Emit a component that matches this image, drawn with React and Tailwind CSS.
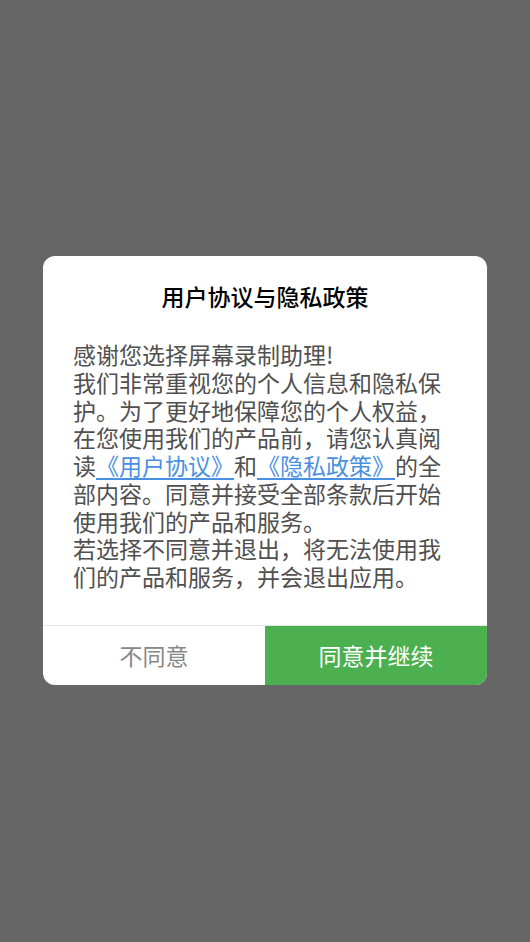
export default function App() {
  return (
    <div
      className="w-[530px] h-[942px] bg-[#666666] flex items-center justify-center"
      style={{ fontFamily: '"Noto Sans CJK SC", "Noto Sans", sans-serif' }}
    >
      <div className="w-[444px] mb-[1px] bg-white rounded-[12px] overflow-hidden flex flex-col">
        <div className="pt-[24px] text-center text-[23px] leading-[32px] font-medium text-black">
          用户协议与隐私政策
        </div>
        <div className="px-[30px] pt-[29px] pb-[34px] text-[23px] leading-[27.8px] text-[#505050]">
          <p>感谢您选择屏幕录制助理!</p>
          <p>
            我们非常重视您的个人信息和隐私保护。为了更好地保障您的个人权益，在您使用我们的产品前，请您认真阅读
            <span className="text-[#4a90e2] underline underline-offset-[3px]">《用户协议》</span>
            和
            <span className="text-[#4a90e2] underline underline-offset-[3px]">《隐私政策》</span>
            的全部内容。同意并接受全部条款后开始使用我们的产品和服务。
          </p>
          <p>若选择不同意并退出，将无法使用我们的产品和服务，并会退出应用。</p>
        </div>
        <div className="flex border-t border-[#e6e6e6] h-[60px]">
          <button className="flex-1 flex items-center justify-center text-[23px] text-[#888888]">
            不同意
          </button>
          <button className="flex-1 flex items-center justify-center bg-[#4caf50] text-[23px] text-white">
            同意并继续
          </button>
        </div>
      </div>
    </div>
  )
}
